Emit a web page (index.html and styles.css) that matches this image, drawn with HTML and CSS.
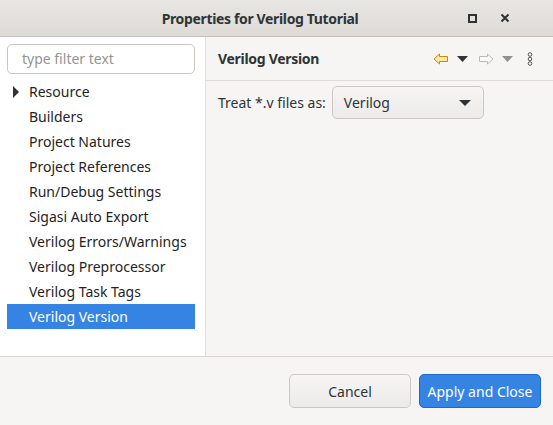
FILE: index.html
```html
<!DOCTYPE html>
<html>
<head>
<meta charset="utf-8">
<link rel="stylesheet" href="styles.css">
</head>
<body>
<div class="window">
  <div class="titlebar">
    <div class="title">Properties for Verilog Tutorial</div>
    <div class="wm-buttons">
      <span class="wm-max"></span>
      <svg class="wm-close" width="10" height="10" viewBox="0 0 10 10"><path d="M1.5 1.5 L8.5 8.5 M8.5 1.5 L1.5 8.5" stroke="#2e3436" stroke-width="2"/></svg>
    </div>
  </div>
  <div class="main">
    <div class="sidebar">
      <div class="filter">type filter text</div>
      <ul class="tree">
        <li class="row"><span class="twisty"></span>Resource</li>
        <li class="row">Builders</li>
        <li class="row">Project Natures</li>
        <li class="row">Project References</li>
        <li class="row">Run/Debug Settings</li>
        <li class="row">Sigasi Auto Export</li>
        <li class="row">Verilog Errors/Warnings</li>
        <li class="row">Verilog Preprocessor</li>
        <li class="row">Verilog Task Tags</li>
        <li class="row selected">Verilog Version</li>
      </ul>
    </div>
    <div class="content">
      <div class="page-header">
        <div class="page-title">Verilog Version</div>
        <div class="nav">
          <svg width="16" height="12" viewBox="0 0 16 12"><path d="M1 6 L6.5 1 L6.5 3.5 L14.5 3.5 L14.5 8.5 L6.5 8.5 L6.5 11 Z" fill="#fde7a0" stroke="#c68a12" stroke-width="1" stroke-linejoin="round"/></svg>
          <svg class="tri" width="11" height="6" viewBox="0 0 11 6"><path d="M0 0 H11 L5.5 6 Z" fill="#2e3436"/></svg>
          <svg class="fwd" width="16" height="12" viewBox="0 0 16 12"><path d="M15 6 L9.5 1 L9.5 3.5 L1.5 3.5 L1.5 8.5 L9.5 8.5 L9.5 11 Z" fill="#fbfbfb" stroke="#b9b9b9" stroke-width="1" stroke-linejoin="round"/></svg>
          <svg class="tri" width="11" height="6" viewBox="0 0 11 6"><path d="M0 0 H11 L5.5 6 Z" fill="#8e9091"/></svg>
          <svg class="more" width="6" height="14" viewBox="0 0 6 14"><circle cx="3" cy="2.5" r="1.8" fill="none" stroke="#555" stroke-width="1"/><circle cx="3" cy="7" r="1.8" fill="none" stroke="#555" stroke-width="1"/><circle cx="3" cy="11.5" r="1.8" fill="none" stroke="#555" stroke-width="1"/></svg>
        </div>
      </div>
      <div class="page-body">
        <span class="label">Treat *.v files as:</span>
        <div class="combo">
          <span>Verilog</span>
          <svg width="12" height="6" viewBox="0 0 12 6"><path d="M0 0 H12 L6 6 Z" fill="#2e3436"/></svg>
        </div>
      </div>
    </div>
  </div>
  <div class="footer">
    <button class="btn">Cancel</button>
    <button class="btn primary">Apply and Close</button>
  </div>
</div>
</body>
</html>
```

FILE: styles.css
```css
* { box-sizing: border-box; }
html, body { margin: 0; padding: 0; }
body {
  font-family: "Noto Sans", "DejaVu Sans", sans-serif;
  font-size: 14px;
  color: #2e3436;
  background: #f6f5f4;
}
.window {
  width: 553px;
  height: 425px;
  display: flex;
  flex-direction: column;
  background: #f6f5f4;
}
.titlebar {
  height: 37px;
  flex: none;
  background: linear-gradient(#e8e6e3, #dedbd7);
  border-bottom: 1px solid #c5c1bc;
  display: flex;
  align-items: center;
  justify-content: center;
  padding-right: 33px;
  position: relative;
}
.title {
  font-weight: bold;
  font-size: 14px;
  letter-spacing: -0.35px;
  color: #2e3436;
}
.wm-buttons {
  position: absolute;
  right: 43px;
  top: 13px;
  display: flex;
  align-items: center;
  gap: 23px;
}
.wm-max {
  width: 9px;
  height: 9px;
  border: 2px solid #2e3436;
}
.main {
  height: 320px;
  flex: none;
  display: flex;
  border-bottom: 1px solid #dad7d3;
}
.sidebar {
  width: 206px;
  flex: none;
  background: #ffffff;
  border-right: 1px solid #e2dfdc;
  padding: 7px 10px 0 7px;
}
.filter {
  height: 30px;
  border: 1px solid #cdc7c2;
  border-radius: 5px;
  background: #fff;
  color: #929595;
  padding-left: 14px;
  line-height: 28px;
}
.tree {
  list-style: none;
  margin: 5px 0 0 0;
  padding: 0;
}
.row {
  height: 25px;
  line-height: 25px;
  padding-left: 22px;
  position: relative;
  color: #1f2324;
}
.twisty {
  position: absolute;
  left: 6px;
  top: 7px;
  width: 0;
  height: 0;
  border-top: 6px solid transparent;
  border-bottom: 6px solid transparent;
  border-left: 6px solid #2e3436;
}
.row.selected {
  background: #3584e4;
  color: #ffffff;
}
.content {
  flex: 1;
  display: flex;
  flex-direction: column;
}
.page-header {
  height: 44px;
  border-bottom: 1px solid #dedbd8;
  display: flex;
  align-items: center;
  justify-content: space-between;
  padding: 0 18px 0 12px;
}
.page-title {
  font-weight: bold;
  letter-spacing: -0.3px;
}
.nav {
  display: flex;
  align-items: center;
  padding-right: 2px;
}
.nav .tri { margin-left: 8px; }
.nav .fwd { margin-left: 10px; }
.nav .more { margin-left: 14px; }
.page-body {
  padding: 5px 0 0 12px;
  display: flex;
  align-items: center;
  gap: 6px;
}
.combo {
  width: 152px;
  height: 33px;
  border: 1px solid #cdc7c2;
  border-radius: 5px;
  background: linear-gradient(#f6f5f4, #edebe9);
  display: flex;
  align-items: center;
  justify-content: space-between;
  padding: 0 12px 0 11px;
}
.footer {
  flex: 1;
  display: flex;
  justify-content: flex-end;
  align-items: flex-start;
  padding: 17px 12px 0 0;
  gap: 8px;
}
.btn {
  font-family: inherit;
  font-size: 14px;
  height: 34px;
  border-radius: 5px;
  border: 1px solid #cdc7c2;
  background: linear-gradient(#f6f5f4, #edebe9);
  color: #2e3436;
  width: 122px;
  padding: 0;
}
.btn.primary {
  background: #3584e4;
  border-color: #1b6acb;
  color: #ffffff;
}
```
